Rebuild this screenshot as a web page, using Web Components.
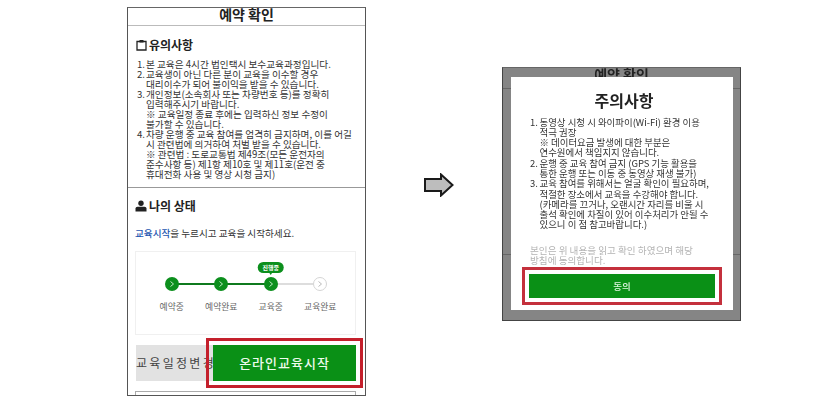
<!DOCTYPE html>
<html><head><meta charset="utf-8"><style>
html,body{margin:0;padding:0;background:#fff}
body{width:815px;height:412px;overflow:hidden;font-family:"Noto Sans CJK KR","Noto Sans",sans-serif;color:#222}
</style></head><body>
<guide-page>
<phone-reserve></phone-reserve>
<flow-arrow></flow-arrow>
<phone-notice></phone-notice>
</guide-page>
<script>
const F='"Noto Sans CJK KR","Noto Sans",sans-serif';
class Base extends HTMLElement{
  constructor(){super();this.attachShadow({mode:'open'}).innerHTML=this.constructor.html;}
}
class GuidePage extends Base{static html=`<style>
:host{display:flex;align-items:flex-start;padding:7px 0 0 127px;box-sizing:border-box;width:815px;height:412px;filter:blur(.4px)}
</style><slot></slot>`}
class NoteList extends Base{static html=`<style>
:host{display:block;font-size:var(--fs,9.65px);line-height:var(--lh,10px);color:#333;white-space:nowrap}
</style><slot></slot>`}
class NoteItem extends Base{static html=`<style>
:host{display:grid;grid-template-columns:var(--num,9px) auto}
.n{grid-column:1}.b{grid-column:2}
</style><span class="n"></span><span class="b"><slot></slot></span>`;
  connectedCallback(){this.shadowRoot.querySelector('.n').textContent=this.getAttribute('n')||'';}
}
const chev='<svg viewBox="0 0 14 14"><path d="M5.5 4.5 8.5 7 5.5 9.5" fill="none" stroke="#bfe8c4" stroke-width="1"/></svg>';
class StepTrack extends Base{static html=`<style>
:host{display:block;box-sizing:border-box;margin:0 9px 0 7px;height:84px;border:1px solid #f0f0f0;position:relative;font-size:8.8px;color:#666}
.row{display:grid;grid-template-columns:repeat(4,49.5px);padding:25px 0 0 0;margin-left:11px}
.s{display:flex;flex-direction:column;align-items:center;position:relative;gap:9px;white-space:nowrap}
.d{width:14px;height:14px;border-radius:50%;background:#0c8f1d;z-index:1;display:block;position:relative}
.d.off{background:#fff;border:1px solid #d5d5d5;box-sizing:border-box}
.line{position:absolute;top:6px;left:50%;width:100%;height:1.5px;background:#0f7a1e}
.line.off{background:#ddd}
.tag{position:absolute;top:-15px;left:50%;transform:translateX(-50%);background:#0c8f1d;color:#fff;font-size:6px;font-weight:700;line-height:11px;height:11px;padding:0 5px;border-radius:6px}
.tag::after{content:"";position:absolute;left:50%;margin-left:-2px;top:10px;border:2px solid transparent;border-top:3px solid #0c8f1d}
svg{display:block;position:absolute;inset:0}
</style><div class="row">
<div class="s"><span class="line"></span><span class="d">${chev}</span><span>예약중</span></div>
<div class="s"><span class="line"></span><span class="d">${chev}</span><span>예약완료</span></div>
<div class="s"><span class="line off"></span><span class="tag">진행중</span><span class="d">${chev}</span><span>교육중</span></div>
<div class="s"><span class="d off"><svg viewBox="0 0 12 12"><path d="M4.5 3.5 7.5 6 4.5 8.5" fill="none" stroke="#bbb" stroke-width="1"/></svg></span><span>교육완료</span></div>
</div>`}
class PhoneReserve extends Base{static html=`<style>
:host{display:block;flex:none;box-sizing:border-box;width:239px;height:389px;border:1.5px solid #555;border-top-color:#666;overflow:hidden;font-family:${F};background:#fff}
h1{margin:0;height:17px;border-bottom:1px solid #bbb;font-size:14px;line-height:13px;font-weight:700;text-align:center;color:#222;overflow:hidden}
.sec1{height:161px;border-bottom:1px solid #999;padding:0 0 0 8px}
h2{margin:0;display:flex;align-items:center;gap:2px;font-size:12px;line-height:14px;font-weight:700;color:#222}
.sec1 h2{padding:12px 0 7px}
.sec1 note-list{padding-left:1px}
.sec2 h2{padding:11px 0 0 7px}
.p{font-size:9.6px;line-height:12px;margin:14px 0 12px 7px;color:#333;white-space:nowrap}
.p b{font-weight:500;color:#2456b0}
.btns{display:flex;margin:10px 8px 0 8px;height:36px}
.gray{width:77px;flex:none;background:#e2e2e2;color:#444;font-size:12px;letter-spacing:2.3px;line-height:36px;overflow:hidden;white-space:nowrap}
.go{width:143px;flex:none;background:#0a9016;color:#eefbee;font-size:13px;font-weight:500;letter-spacing:1px;text-align:center;line-height:36px;outline:3px solid #c4202c;outline-offset:4px}
.last{margin:10px 9px 0 7px;height:10px;border:1px solid #aaa}
svg{flex:none}
</style>
<h1>예약 확인</h1>
<div class="sec1">
<h2><svg width="11" height="12" viewBox="0 0 11 12"><path d="M1 2.500H10V11H1Z" fill="none" stroke="#222" stroke-width="1.300"/><path d="M3.500 1H7.500V3.500H3.500Z" fill="#222"/></svg>유의사항</h2>
<note-list>
<note-item n="1.">본 교육은 4시간 법인택시 보수교육과정입니다.</note-item>
<note-item n="2.">교육생이 아닌 다른 분이 교육을 이수할 경우<br>대리이수가 되어 불이익을 받을 수 있습니다.</note-item>
<note-item n="3.">개인정보(소속회사 또는 차량번호 등)를 정확히<br>입력해주시기 바랍니다.<br>※ 교육일정 종료 후에는 입력하신 정보 수정이<br>불가할 수 있습니다.</note-item>
<note-item n="4.">차량 운행 중 교육 참여를 엄격히 금지하며, 이를 어길<br>시 관련법에 의거하여 처벌 받을 수 있습니다.<br>※ 관련법 : 도로교통법 제49조(모든 운전자의<br>준수사항 등) 제1항 제10호 및 제11호(운전 중<br>휴대전화 사용 및 영상 시청 금지)</note-item>
</note-list>
</div>
<div class="sec2">
<h2><svg width="12" height="12" viewBox="0 0 12 12"><circle cx="6" cy="3.200" r="2.700" fill="#222"/><path d="M0.500 11.500V8.500Q0.500 6.800 2.500 6.800H9.500Q11.500 6.800 11.500 8.500V11.500Z" fill="#222"/></svg>나의 상태</h2>
<div class="p"><b>교육시작</b>을 누르시고 교육을 시작하세요.</div>
<step-track></step-track>
<div class="btns"><div class="gray">교육일정변경</div><div class="go">온라인교육시작</div></div>
<div class="last"></div>
</div>`}
class FlowArrow extends Base{static html=`<style>
:host{display:block;flex:none;margin:166px 50px 0 58px;width:30px;height:24px}
svg{display:block}
</style><svg width="30" height="24" viewBox="0 0 30 24"><path d="M1 6H17V1.500L28.500 12 17 22.500V18H1Z" fill="#bdbdbd" stroke="#1a1a1a" stroke-width="2"/></svg>`}
class PhoneNotice extends Base{static html=`<style>
:host{display:block;flex:none;box-sizing:border-box;margin-top:60px;margin-left:-2px;width:239px;height:254px;border:1.5px solid #444;border-top-color:#666;background:linear-gradient(#666,#666) 0 20px/100% 1px no-repeat,linear-gradient(#666,#666) 0 186px/100% 1px no-repeat,#858585;font-family:${F};position:relative;overflow:hidden}
.under{height:8.500px;text-align:center;font-size:14px;line-height:13px;font-weight:700;color:#222;overflow:hidden}
.m{box-sizing:border-box;margin:0 7px 0 8px;height:233px;background:#fff;padding:13px 0 0 19px}
h3{margin:0 0 7px;text-align:center;font-size:16px;line-height:20px;font-weight:700;color:#222;padding-right:15px}
note-list{--fs:9.45px;--lh:10.300px;--num:9.500px}
.agree{margin-top:15px;font-size:9.600px;line-height:10.200px;color:#b4b4b4;white-space:nowrap}
.btn{margin:9px 0 0 -1px;width:186px;height:24px;background:#0a9016;color:#dff5df;font-size:9.500px;font-weight:500;text-align:center;line-height:24px;outline:3px solid #c4303c;outline-offset:4px}
</style>
<div class="under">예약 확인</div>
<div class="m">
<h3>주의사항</h3>
<note-list>
<note-item n="1.">동영상 시청 시 와이파이(Wi-Fi) 환경 이용<br>적극 권장<br>※ 데이터요금 발생에 대한 부분은<br>연수원에서 책임지지 않습니다.</note-item>
<note-item n="2.">운행 중 교육 참여 금지 (GPS 기능 활용을<br>통한 운행 또는 이동 중 동영상 재생 불가)</note-item>
<note-item n="3.">교육 참여를 위해서는 얼굴 확인이 필요하며,<br>적절한 장소에서 교육을 수강해야 합니다.<br>(카메라를 끄거나, 오랜시간 자리를 비울 시<br>출석 확인에 차질이 있어 이수처리가 안될 수<br>있으니 이 점 참고바랍니다.)</note-item>
</note-list>
<div class="agree">본인은 위 내용을 읽고 확인 하였으며 해당<br>방침에 동의합니다.</div>
<div class="btn">동의</div>
</div>`}
customElements.define('guide-page',GuidePage);
customElements.define('note-list',NoteList);
customElements.define('note-item',NoteItem);
customElements.define('step-track',StepTrack);
customElements.define('phone-reserve',PhoneReserve);
customElements.define('flow-arrow',FlowArrow);
customElements.define('phone-notice',PhoneNotice);
</script>
</body></html>
